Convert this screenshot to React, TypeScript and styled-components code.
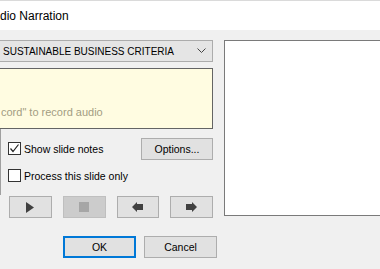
import React from "react";
import styled, { createGlobalStyle } from "styled-components";

const Global = createGlobalStyle`
  html, body { margin: 0; padding: 0; background: #f0f0f0; }
  body { font-family: "Liberation Sans", Arial, sans-serif; }
`;

const Window = styled.div`
  width: 380px;
  height: 269px;
  background: #f0f0f0;
  overflow: hidden;
  display: flex;
  flex-direction: column;
  color: #000;
  font-size: 10.5px;
`;

const TitleBar = styled.div`
  height: 29px;
  background: #fff;
  border-top: 1px solid #dadada;
  display: flex;
  align-items: center;
  font-size: 12px;
  white-space: nowrap;
`;

const Body = styled.div`
  display: flex;
  align-items: flex-start;
  padding-top: 10px;
`;

const LeftCol = styled.div`
  width: 213px;
  display: flex;
  flex-direction: column;
`;

const Select = styled.div`
  height: 20px;
  border: 1px solid #acacac;
  border-left: none;
  background: #e5e5e5;
  display: flex;
  align-items: center;
  justify-content: space-between;
  padding: 0 6px 0 3px;
  font-size: 10px;
  white-space: nowrap;
`;

const NoteBox = styled.div`
  margin-top: 6px;
  height: 61px;
  box-sizing: border-box;
  border: 1px solid #646464;
  border-left: none;
  background: #fffce1;
  display: flex;
  align-items: flex-end;
  padding: 0 0 10px 1px;
  color: #a39d82;
  font-size: 11px;
  white-space: nowrap;
`;

const Options = styled.div`
  border-left: 1px solid #a0a0a0;
  padding: 9px 0 9px 7px;
  display: flex;
  flex-direction: column;
  gap: 6px;
`;

const OptionRow = styled.div`
  height: 21px;
  display: flex;
  align-items: center;
  justify-content: space-between;
`;

const CheckLabel = styled.label`
  display: flex;
  align-items: center;
  gap: 3px;
  white-space: nowrap;
`;

const Box = styled.span`
  width: 11px;
  height: 11px;
  border: 1px solid #333;
  background: #fff;
  display: inline-flex;
  align-items: center;
  justify-content: center;
`;

const Button = styled.div<{ $w?: number; $primary?: boolean; $disabled?: boolean }>`
  width: ${(p) => p.$w ?? 43}px;
  height: 22px;
  box-sizing: border-box;
  border: ${(p) => (p.$primary ? "2px solid #0078d7" : p.$disabled ? "1px solid #bfbfbf" : "1px solid #adadad")};
  background: ${(p) => (p.$disabled ? "#cccccc" : "#e1e1e1")};
  display: flex;
  align-items: center;
  justify-content: center;
  white-space: nowrap;
`;

const Transport = styled.div`
  display: flex;
  gap: 11px;
  padding-left: 9px;
  padding-top: 1px;
`;

const Preview = styled.div`
  margin-left: 11px;
  width: 170px;
  height: 176px;
  box-sizing: border-box;
  border: 1px solid #7a7a7a;
  background: #fff;
  flex-shrink: 0;
`;

const Footer = styled.div`
  display: flex;
  gap: 8px;
  padding-left: 63px;
  margin-top: 18px;
`;

const Chevron = () => (
  <svg width="9" height="6" viewBox="0 0 9 6">
    <polyline points="0.5,0.5 4.5,4.5 8.5,0.5" fill="none" stroke="#444" strokeWidth="1" />
  </svg>
);

const Check = () => (
  <svg width="11" height="11" viewBox="0 0 11 11">
    <polyline points="1.5,5.5 4,8.5 9.5,1.5" fill="none" stroke="#222" strokeWidth="1.2" />
  </svg>
);

const Play = () => (
  <svg width="8" height="11" viewBox="0 0 8 11">
    <polygon points="0,0 8,5.5 0,11" fill="#404040" />
  </svg>
);

const Stop = () => (
  <svg width="10" height="10" viewBox="0 0 10 10">
    <rect width="10" height="10" fill="#a6a6a6" />
  </svg>
);

const ArrowLeft = () => (
  <svg width="11" height="10" viewBox="0 0 11 10">
    <polygon points="0,5 5,0 5,2 11,2 11,8 5,8 5,10" fill="#404040" />
  </svg>
);

const ArrowRight = () => (
  <svg width="11" height="10" viewBox="0 0 11 10">
    <polygon points="11,5 6,0 6,2 0,2 0,8 6,8 6,10" fill="#404040" />
  </svg>
);

export default function App() {
  return (
    <>
      <Global />
      <Window>
        <TitleBar>dio Narration</TitleBar>
        <Body>
          <LeftCol>
            <Select>
              <span>SUSTAINABLE BUSINESS CRITERIA</span>
              <Chevron />
            </Select>
            <NoteBox>cord" to record audio</NoteBox>
            <Options>
              <OptionRow>
                <CheckLabel>
                  <Box>
                    <Check />
                  </Box>
                  Show slide notes
                </CheckLabel>
                <Button $w={72}>Options...</Button>
              </OptionRow>
              <OptionRow>
                <CheckLabel>
                  <Box />
                  Process this slide only
                </CheckLabel>
              </OptionRow>
            </Options>
            <Transport>
              <Button>
                <Play />
              </Button>
              <Button $disabled>
                <Stop />
              </Button>
              <Button>
                <ArrowLeft />
              </Button>
              <Button>
                <ArrowRight />
              </Button>
            </Transport>
          </LeftCol>
          <Preview />
        </Body>
        <Footer>
          <Button $w={73} $primary>
            OK
          </Button>
          <Button $w={73}>Cancel</Button>
        </Footer>
      </Window>
    </>
  );
}
